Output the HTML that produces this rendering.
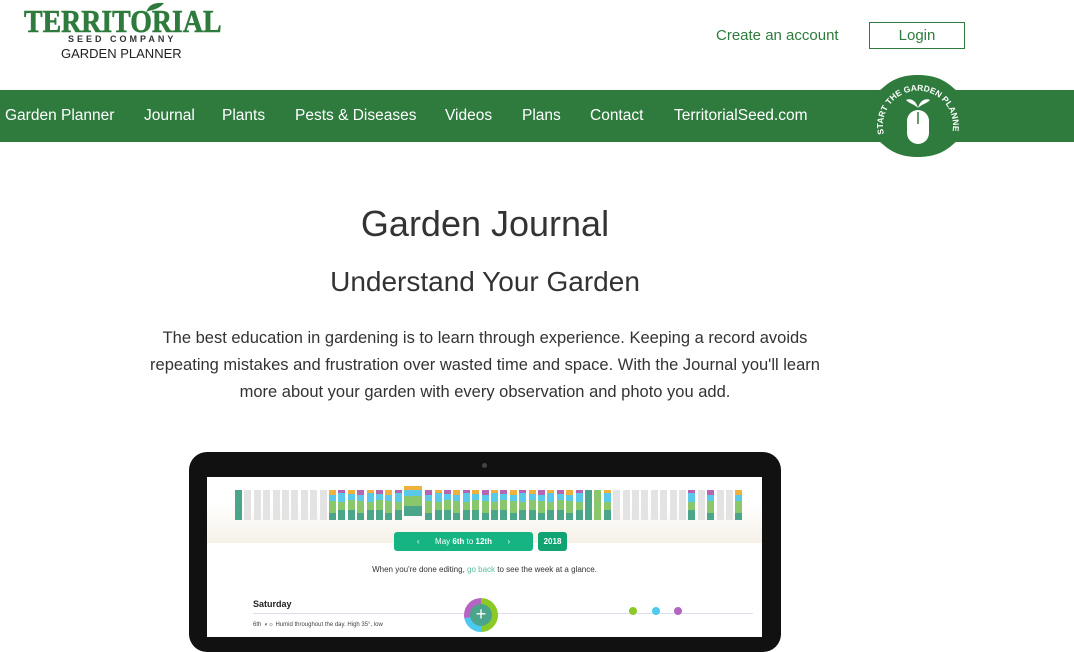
<!DOCTYPE html>
<html><head><meta charset="utf-8"><style>
*{margin:0;padding:0;box-sizing:border-box}
body{width:1074px;height:632px;overflow:hidden;background:#fff;font-family:"Liberation Sans",sans-serif;position:relative;color:#333}
.abs{position:absolute}
.nav{left:0;top:90px;width:1074px;height:52px;background:#2e7b3d}
.nav span{position:absolute;top:17px;color:#fff;font-size:15.5px}
h1{position:absolute;left:0;width:976px;text-align:center;font-weight:400}
</style></head><body>
<div class="abs" style="left:24px;top:3px;color:#2e7b3d;font-family:'Liberation Serif',serif;font-weight:bold;font-size:32px;white-space:nowrap;transform:scaleX(0.87);transform-origin:left;-webkit-text-stroke:0.6px #2e7b3d">TERRITORIAL</div>
<svg class="abs" style="left:140px;top:0" width="30" height="14"><path d="M6 13 C8 5 14 2 24 3 C20 8 14 10 8 11Z" fill="#2e7b3d"/></svg>
<div class="abs" style="left:68px;top:34px;font-size:9px;font-weight:bold;letter-spacing:3px;color:#333">SEED COMPANY</div>
<div class="abs" style="left:61px;top:46px;font-size:13px;color:#222">GARDEN PLANNER</div>
<div class="abs" style="left:716px;top:27px;font-size:15px;color:#2e7b3d">Create an account</div>
<div class="abs" style="left:869px;top:22px;width:96px;height:27px;border:1px solid #2e7b3d;color:#2e7b3d;font-size:15px;text-align:center;line-height:25px">Login</div>
<div class="abs nav">
<span style="left:5px">Garden Planner</span><span style="left:144px">Journal</span><span style="left:222px">Plants</span><span style="left:295px">Pests &amp; Diseases</span><span style="left:445px">Videos</span><span style="left:522px">Plans</span><span style="left:590px">Contact</span><span style="left:674px">TerritorialSeed.com</span>
</div>
<svg class="abs" style="left:868px;top:72px" width="100" height="88" viewBox="0 0 100 88">
<path d="M4 22 C14 22 18 3 50 3 C82 3 86 22 96 22 L96 66 C86 66 82 85 50 85 C18 85 14 66 4 66Z" fill="#2e7b3d"/>
<path id="arc" d="M16 62 A35 35 0 1 1 84 62" fill="none"/>
<text font-size="8.5" font-weight="bold" fill="#fff" font-family="Liberation Sans"><textPath href="#arc">START THE GARDEN PLANNER</textPath></text>
<rect x="39" y="38" width="22" height="34" rx="11" fill="#fff"/>
<line x1="50" y1="40" x2="50" y2="52" stroke="#2e7b3d" stroke-width="1.5"/>
<path d="M50 36 C48 28 42 26 38 28 C42 32 46 32 50 36 C52 28 58 26 62 28 C58 32 54 32 50 36" fill="#fff"/>
</svg>
<h1 style="top:203px;font-size:36px;color:#333;width:970px">Garden Journal</h1>
<h1 style="top:266px;font-size:28px;color:#333;width:970px">Understand Your Garden</h1>
<div class="abs" style="left:135px;width:700px;top:325px;text-align:center;font-size:16.5px;line-height:27px;color:#333">The best education in gardening is to learn through experience. Keeping a record avoids repeating mistakes and frustration over wasted time and space. With the Journal you'll learn more about your garden with every observation and photo you add.</div>
<div class="abs" style="left:189px;top:452px;width:592px;height:200px;background:#111;border-radius:18px"></div>
<div class="abs" style="left:482px;top:463px;width:5px;height:5px;border-radius:50%;background:#444"></div>
<div class="abs" style="left:207px;top:477px;width:555px;height:160px;background:#fff;overflow:hidden">
<div class="abs" style="left:0;top:0;width:555px;height:66px;background:linear-gradient(#fff 40%,#f6f1e8)"></div>
<div id="bars"></div>
<div class="abs" style="left:187px;top:55px;width:139px;height:19px;background:#16b482;border-radius:3px;color:#fff;font-size:8px;text-align:center;line-height:19px">‹ &nbsp;&nbsp;&nbsp;&nbsp;&nbsp;&nbsp;May <b>6th</b> to <b>12th</b>&nbsp;&nbsp;&nbsp;&nbsp;&nbsp;&nbsp; ›</div>
<div class="abs" style="left:331px;top:55px;width:29px;height:19px;background:#12a373;border-radius:3px;color:#fff;font-size:8px;font-weight:bold;text-align:center;line-height:19px">2018</div>
<div class="abs" style="left:0;width:555px;top:88px;text-align:center;font-size:8px;color:#333">When you're done editing, <span style="color:#5bbf9a">go back</span> to see the week at a glance.</div>
<div class="abs" style="left:46px;top:122px;font-size:9px;font-weight:bold;color:#222">Saturday</div>
<div class="abs" style="left:46px;top:136px;width:500px;height:1px;background:#dde"></div>
<div class="abs" style="left:46px;top:145px;font-size:6px;color:#444">6th &nbsp;◐☼ Humid throughout the day. High 35°, low</div>
<div class="abs" style="left:257px;top:121px;width:34px;height:34px;border-radius:50%;background:conic-gradient(#8ac926 0 50%,#4cc9f0 50% 72%,#b565c1 72%)"></div>
<div class="abs" style="left:263px;top:127px;width:22px;height:22px;border-radius:50%;background:#4aa58a;color:#fff;text-align:center;font-size:18px;line-height:21px">+</div>
<div class="abs" style="left:422px;top:130px;width:8px;height:8px;border-radius:50%;background:#8ac926"></div>
<div class="abs" style="left:445px;top:130px;width:8px;height:8px;border-radius:50%;background:#4cc9f0"></div>
<div class="abs" style="left:467px;top:130px;width:8px;height:8px;border-radius:50%;background:#b565c1"></div>
</div>
<script>
var c=["#4aa58a","#8ac66b","#5ac8e8","#b565b1","#f0b03c"];
var h='',x=28;
var pats="G.........XXXXXXXXXXXXXXXXXXXXXXXXXXGGX........X.X..X.X...X..X.X..";
for(var i=0;i<53;i++){var t=pats[i]||'.';var seg;
if(t=='.')seg='<div style="height:30px;background:#e3e3e3"></div>';
else if(t=='G')seg='<div style="height:30px;background:'+(i%2?'#8ac66b':'#4aa58a')+'"></div>';
else{var hs=[[4,6,10,10],[5,6,12,7],[3,9,8,10]][i%3];var cs=[c[(i%2)?3:4],c[2],c[1],c[0]];seg='';for(var k=0;k<4;k++)seg+='<div style="height:'+hs[k]+'px;background:'+cs[k]+'"></div>';}
var big=(i==18);
h+='<div style="position:absolute;left:'+x+'px;top:'+(big?9:13)+'px;width:'+(big?18:7)+'px;display:flex;flex-direction:column;height:'+(big?38:30)+'px;overflow:hidden">'+seg+'</div>';
x+=big?21:9.4;}
document.getElementById('bars').innerHTML=h;
</script>
</body></html>
